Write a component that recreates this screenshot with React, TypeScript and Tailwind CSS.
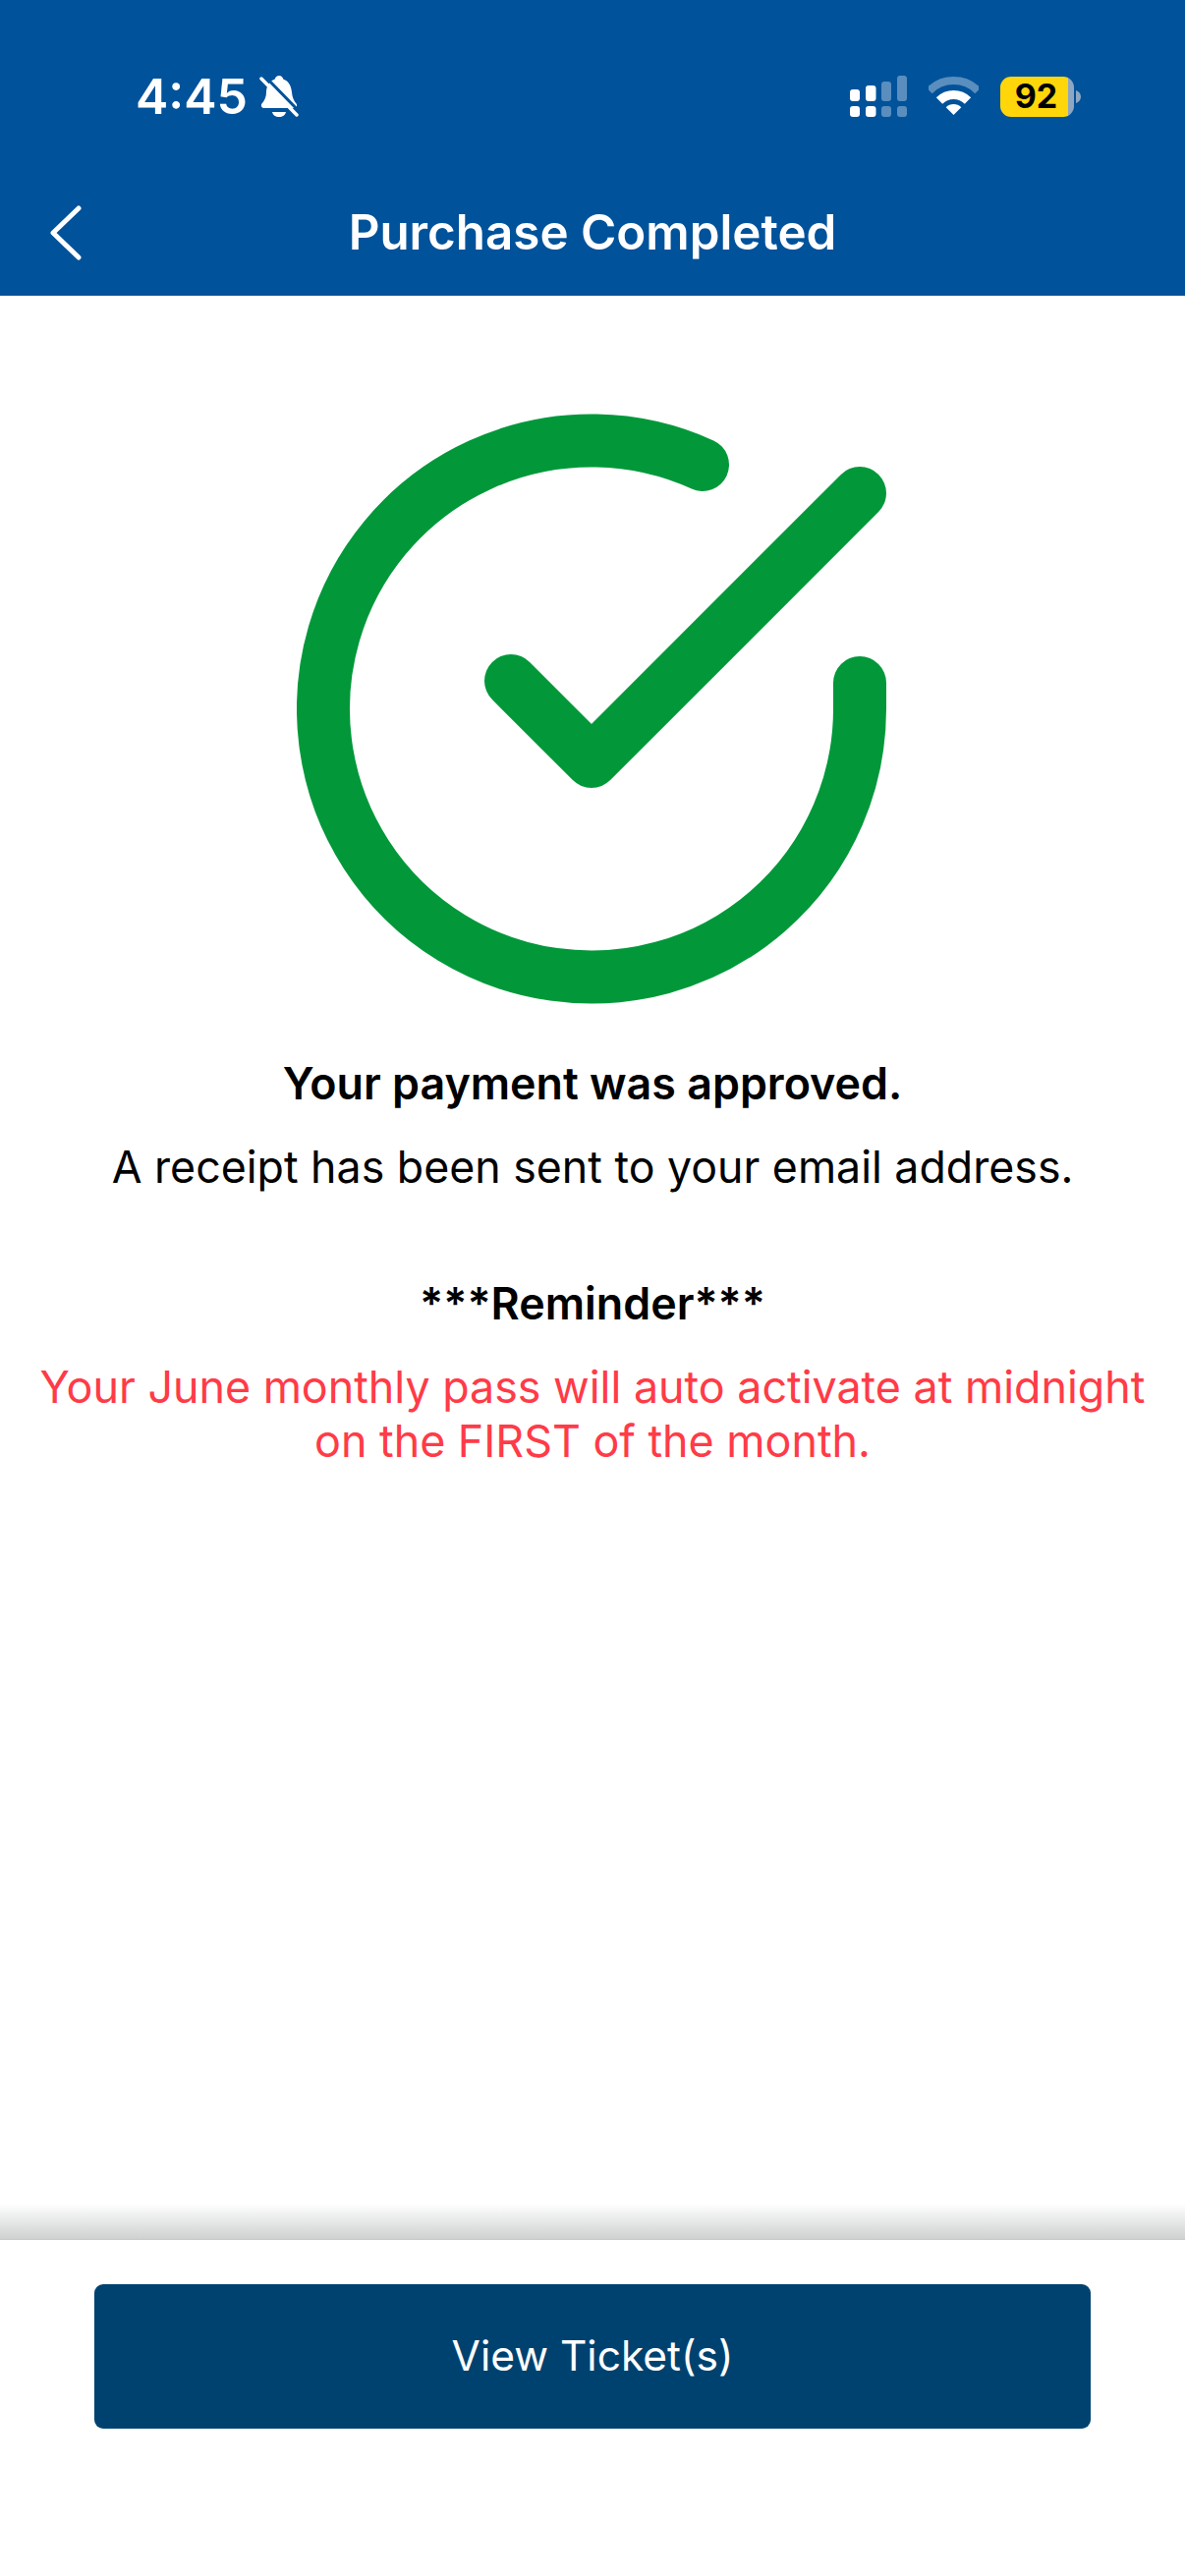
export default function App() {
  return (
    <div className="flex h-[2622px] w-[1206px] flex-col bg-white font-['Inter',sans-serif] text-black">
      {/* header */}
      <header className="h-[301px] bg-[#00529b] text-white">
        <div className="flex h-[196px] items-start pl-[138px] pr-[106px] pt-[77px]">
          <div className="flex items-center gap-[12px]">
            <span className="text-[50px] font-semibold leading-[42px]">4:45</span>
            <svg width="40" height="42" viewBox="0 0 40 42" fill="white">
              <path d="M20 0c2.200 0 3.800 1.500 4.200 3.500C30 5.500 32.500 11 33 17c.4 5 2 8.500 4.500 11.500 1.200 1.500.5 4.500-2 4.500H4.500c-2.500 0-3.200-3-2-4.500C5 25.500 7 22 7 17 7 11 10 5.500 15.800 3.500 16.200 1.500 17.800 0 20 0Z" />
              <path d="M13 37h14c-.5 3-3.500 5-7 5s-6.500-2-7-5Z" />
              <path d="M5 0 41 37" stroke="#00529b" strokeWidth="3" />
              <path d="M2 3 38 40" stroke="white" strokeWidth="3.500" strokeLinecap="round" />
            </svg>
          </div>
          <div className="ml-auto flex items-center">
            <svg width="58" height="42" viewBox="0 0 58 42" fill="white">
              <rect x="0" y="14" width="10" height="12" rx="3" />
              <rect x="16" y="10" width="10.500" height="16" rx="3" />
              <rect x="32" y="6" width="10" height="20" rx="3" opacity="0.35" />
              <rect x="48" y="0" width="10" height="26" rx="3" opacity="0.35" />
              <rect x="0" y="31" width="10" height="11" rx="3" />
              <rect x="16" y="31" width="10.500" height="11" rx="3" />
              <rect x="32" y="31" width="10" height="11" rx="3" opacity="0.35" />
              <rect x="48" y="31" width="10" height="11" rx="3" opacity="0.35" />
            </svg>
            <svg className="ml-[22px]" width="51" height="40" viewBox="0 0 51 40" fill="none">
              <path d="M0.800 14.300A35 35 0 0 1 50.200 14.300" stroke="white" strokeWidth="8" opacity="0.35" />
              <path d="M11 24.500A20.500 20.500 0 0 1 40 24.500" stroke="white" strokeWidth="9" />
              <path d="M25.500 39 17.700 31.200A11 11 0 0 1 33.300 31.200Z" fill="white" />
            </svg>
            <div className="ml-[22px] flex h-[41px] w-[75px] overflow-hidden rounded-[11px]">
              <div className="flex flex-1 items-center justify-center bg-[#ffd60a] pl-[4px] text-[34px] font-bold leading-none text-black">
                92
              </div>
              <div className="w-[6px] bg-[#8da6c4]" />
            </div>
            <svg className="ml-[2px]" width="5" height="13" viewBox="0 0 5 13" fill="#8da6c4">
              <path d="M0 0c3 1 5 3.500 5 6.500S3 12 0 13Z" />
            </svg>
          </div>
        </div>
        <div className="grid h-[105px] grid-cols-[1fr_auto_1fr] items-start">
          <div className="pl-[50px] pt-[13px]">
            <svg className="block" width="34" height="56" viewBox="0 0 34 56" fill="none">
              <path d="M30 3 4 28 30 53" stroke="white" strokeWidth="5" strokeLinecap="round" strokeLinejoin="round" />
            </svg>
          </div>
          <h1 className="pt-[10px] text-[49.300px] font-semibold leading-[60px]">Purchase Completed</h1>
        </div>
      </header>

      {/* content */}
      <main className="flex flex-1 flex-col items-center pt-[120px]">
        <svg width="602" height="602" viewBox="0 0 602 602" fill="none">
          <path
            d="M573 274V300A273 273 0 1 1 413 52"
            stroke="#02983a"
            strokeWidth="54"
            strokeLinecap="round"
          />
          <path
            d="M218 272 300 354 573 81"
            stroke="#02983a"
            strokeWidth="54"
            strokeLinecap="round"
            strokeLinejoin="round"
          />
        </svg>
        <p className="mt-[53px] text-[44.800px] font-semibold leading-[55px]">Your payment was approved.</p>
        <p className="mt-[30px] text-[44.700px] leading-[55px]">A receipt has been sent to your email address.</p>
        <p className="mt-[84px] text-[44.800px] font-semibold leading-[55px]">***Reminder***</p>
        <p className="mt-[30px] text-center text-[44.800px] leading-[55px] text-[#ff3b47]">
          Your June monthly pass will auto activate at midnight
          <br />
          on the FIRST of the month.
        </p>
      </main>

      {/* footer */}
      <div className="h-[37px] border-b border-[#c8caca] bg-gradient-to-b from-white to-[#cfd1d1]" />
      <footer className="h-[342px] px-[96px] pt-[45px]">
        <button className="h-[147px] w-full rounded-[9px] bg-[#00426f] text-[42.500px] leading-none text-white">
          View Ticket(s)
        </button>
      </footer>
    </div>
  );
}
